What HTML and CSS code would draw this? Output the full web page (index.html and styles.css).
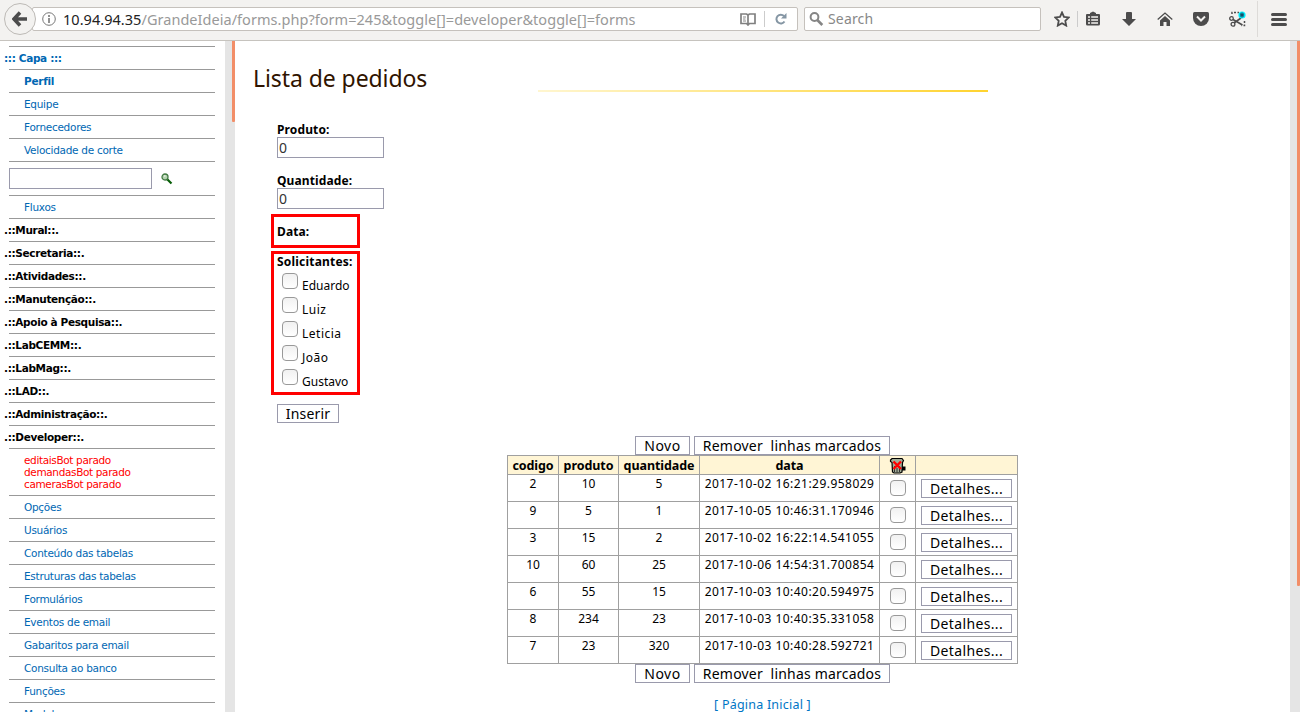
FILE: index.html
```html
<!DOCTYPE html>
<html lang="pt-BR">
<head>
<meta charset="utf-8">
<title>Lista de pedidos</title>
<link rel="stylesheet" href="styles.css">
</head>
<body>
<header class="toolbar">
  <div class="back"><svg width="16" height="16" viewBox="0 0 16 16"><path d="M8 1.500 2 8l6 6.500M2.500 8H15" fill="none" stroke="#4c4c4c" stroke-width="3.500"/></svg></div>
  <div class="address">
    <svg class="info" width="14" height="14" viewBox="0 0 14 14"><circle cx="7" cy="7" r="6.300" fill="none" stroke="#777"/><path d="M7 3v2M7 6v5" stroke="#777" stroke-width="1.600"/></svg>
    <span class="url"><b>10.94.94.35</b>/GrandeIdeia/forms.php?form=245&amp;toggle[]=developer&amp;toggle[]=forms</span>
    <svg class="reader" width="16" height="13" viewBox="0 0 16 13"><path d="M1 1h5.500L8 2l1.500-1H15v9.500H9.500L8 12l-1.500-1.500H1zM8 2v9" fill="none" stroke="#808080" stroke-width="1.700"/><path d="M3 4h3M3 6h2.500M3 8h3" stroke="#888"/></svg>
    <i class="split"></i>
    <svg class="reload" width="12" height="12" viewBox="0 0 12 12"><path d="M9.500 8.500A4.400 4.400 0 1 1 9 3" fill="none" stroke="#8596a4" stroke-width="2"/><path d="M11.500 0v5.500H6z" fill="#8596a4"/></svg>
  </div>
  <div class="search"><svg width="15" height="14" viewBox="0 0 15 14"><circle cx="5.500" cy="5" r="3.900" fill="none" stroke="#858585" stroke-width="2"/><path d="m8.300 8 5 5" stroke="#858585" stroke-width="2.600"/></svg><span>Search</span></div>
  <nav class="tools">
    <svg class="star" width="16" height="16" viewBox="0 0 16 16"><path d="m8 1.500 2 4.300 4.800.6-3.500 3.400.9 4.800L8 12.300l-4.200 2.300.9-4.800L1.200 6.400 6 5.800z" fill="none" stroke="#4c4c4c" stroke-width="1.800"/></svg>
    <i class="split bar"></i>
    <svg class="clip" width="14" height="16" viewBox="0 0 14 16"><path d="M0 4q0-1 1-1h3V2L7 .5 10 2v1h3q1 0 1 1v9q0 1.500-1.500 1.500h-11Q0 14.500 0 13z" fill="#4c4c4c"/><path d="M2 6h2m1.200 0H12M2 9h2m1.200 0H12M2 12h2m1.200 0H12" stroke="#f3f2f0" stroke-width="1.600"/></svg>
    <svg class="down" width="14" height="15" viewBox="0 0 14 15"><path d="M4 1q0-1 1-1h4q1 0 1 1v6h4l-7 7-7-7h4z" fill="#4c4c4c"/></svg>
    <svg class="home" width="16" height="15" viewBox="0 0 16 15"><path d="m.7 7.500 7.300-6.500 7.300 6.500" fill="none" stroke="#4c4c4c" stroke-width="1.300"/><path d="M3 8.500 8 4l5 4.500V14H9.500v-4h-3v4H3z" fill="#4c4c4c"/></svg>
    <svg class="pocket" width="16" height="14" viewBox="0 0 16 14"><path d="M0 1.500Q0 0 1.500 0h13Q16 0 16 1.500V6a8 8 0 0 1-16 0z" fill="#4c4c4c"/><path d="M4 4.500 8 8.500l4-4" fill="none" stroke="#f3f2f0" stroke-width="2"/></svg>
    <svg class="cut" width="17" height="16" viewBox="0 0 17 16"><path d="M3 3V1.500h7M15.500 10v4.500h-3" fill="none" stroke="#4c4c4c" stroke-width="1.500" stroke-dasharray="2 1.500"/><circle cx="2.500" cy="7.500" r="1.800" fill="none" stroke="#4c4c4c" stroke-width="1.300"/><circle cx="4" cy="13.200" r="1.900" fill="none" stroke="#4c4c4c" stroke-width="1.300"/><path d="m4 8.500 9.500 5.500M5 12l7-5" stroke="#4c4c4c" stroke-width="1.600"/><circle cx="13" cy="4" r="3.600" fill="#00f0ff"/><path d="M13 1.600v4.800M11 2.800l4 2.400m0-2.400-4 2.400" stroke="#174c65" stroke-width="1.200"/></svg>
    <i class="split tall"></i>
    <svg class="menu" width="16" height="13" viewBox="0 0 16 13"><path d="M1.500 1.500h13M1.500 6.500h13M1.500 11.500h13" stroke="#4c4c4c" stroke-width="3" stroke-linecap="round"/></svg>
  </nav>
</header>
<div class="page">
  <aside class="sidebar">
    <ul class="side-list">
      <li class="group link">::: Capa :::</li>
      <li><b>Perfil</b></li><li>Equipe</li><li>Fornecedores</li><li>Velocidade de corte</li>
      <li class="find"><input class="find-box" type="text"><svg width="12" height="12" viewBox="0 0 12 12"><path d="m6 6 4.500 4.500" stroke="#075e07" stroke-width="2.200"/><circle cx="4" cy="4" r="3" fill="#b5d3b1" stroke="#427a42" stroke-width="1.300"/><path d="M3 3h1.500" stroke="#fff"/></svg></li>
      <li>Fluxos</li>
      <li class="group">.::Mural::.</li><li class="group">.::Secretaria::.</li><li class="group">.::Atividades::.</li><li class="group">.::Manutenção::.</li><li class="group">.::Apoio à Pesquisa::.</li><li class="group">.::LabCEMM::.</li><li class="group">.::LabMag::.</li><li class="group">.::LAD::.</li><li class="group">.::Administração::.</li><li class="group">.::Developer::.</li>
      <li class="bots">editaisBot parado<br>demandasBot parado<br>camerasBot parado</li>
      <li>Opções</li><li>Usuários</li><li>Conteúdo das tabelas</li><li>Estruturas das tabelas</li><li>Formulários</li><li>Eventos de email</li><li>Gabaritos para email</li><li>Consulta ao banco</li><li>Funções</li><li>Modelos</li>
    </ul>
  </aside>
  <div class="scroll"><i class="thumb"></i></div>
  <main class="content">
    <div class="heading"><h1>Lista de pedidos</h1><i class="rule"></i></div>
    <form class="order">
      <label class="caption">Produto:</label><input class="field" type="text" value="0">
      <label class="caption second">Quantidade:</label><input class="field" type="text" value="0">
      <div class="mark date"><b class="caption">Data:</b></div>
      <div class="mark people"><b class="caption">Solicitantes:</b>
        <label><input type="checkbox"><span>Eduardo</span></label><label><input type="checkbox"><span class="wide">Luiz</span></label><label><input type="checkbox"><span class="wide">Leticia</span></label><label><input type="checkbox"><span class="wide">João</span></label><label><input type="checkbox"><span>Gustavo</span></label>
      </div>
      <button class="btn insert" type="button">Inserir</button>
    </form>
    <div class="actions"><button class="btn new">Novo</button><button class="btn remove">Remover&nbsp; linhas marcados</button></div>
    <table class="orders">
      <colgroup><col class="c1"><col class="c2"><col class="c3"><col class="c4"><col class="c5"><col class="c6"></colgroup>
      <thead><tr><th>codigo</th><th>produto</th><th>quantidade</th><th>data</th><th><svg class="trash" width="17" height="17" viewBox="0 0 17 17"><path d="M3 1.500h10l1.500 2-1 2L13 15l-2 1H5l-1.500-1L3 5.500l-1.500-1V3z" fill="#a3ad98" stroke="#000" stroke-width="1.200"/><path d="M5.500 9v6M8 11v4.500M10.500 9v6" stroke="#333"/><path d="M13 9.500h3.500v4H13z" fill="#000"/><path d="m4.500 4.500 7.500 7.500m0-7.500-7.500 7.500" stroke="#f00" stroke-width="2.400"/></svg></th><th></th></tr></thead>
      <tbody>
        <tr><td>2</td><td>10</td><td>5</td><td class="stamp">2017-10-02 16:21:29.958029</td><td><input type="checkbox"></td><td><button class="btn detail">Detalhes...</button></td></tr>
        <tr><td>9</td><td>5</td><td>1</td><td class="stamp">2017-10-05 10:46:31.170946</td><td><input type="checkbox"></td><td><button class="btn detail">Detalhes...</button></td></tr>
        <tr><td>3</td><td>15</td><td>2</td><td class="stamp">2017-10-02 16:22:14.541055</td><td><input type="checkbox"></td><td><button class="btn detail">Detalhes...</button></td></tr>
        <tr><td>10</td><td>60</td><td>25</td><td class="stamp">2017-10-06 14:54:31.700854</td><td><input type="checkbox"></td><td><button class="btn detail">Detalhes...</button></td></tr>
        <tr><td>6</td><td>55</td><td>15</td><td class="stamp">2017-10-03 10:40:20.594975</td><td><input type="checkbox"></td><td><button class="btn detail">Detalhes...</button></td></tr>
        <tr><td>8</td><td>234</td><td>23</td><td class="stamp">2017-10-03 10:40:35.331058</td><td><input type="checkbox"></td><td><button class="btn detail">Detalhes...</button></td></tr>
        <tr><td>7</td><td>23</td><td>320</td><td class="stamp">2017-10-03 10:40:28.592721</td><td><input type="checkbox"></td><td><button class="btn detail">Detalhes...</button></td></tr>
      </tbody>
    </table>
    <div class="actions"><button class="btn new">Novo</button><button class="btn remove">Remover&nbsp; linhas marcados</button></div>
    <div class="footer">[ Página Inicial ]</div>
  </main>
  <div class="scroll right"><i class="thumb"></i></div>
</div>
</body>
</html>
```
FILE: styles.css
```css
* { box-sizing: border-box; }
html, body { margin: 0; height: 712px; overflow: hidden; }
body { background: #fff; color: #000; font-family: "Noto Sans", sans-serif; font-size: 12px; }
svg { display: block; flex: none; }

.toolbar { display: flex; height: 41px; padding: 7px 0 0 4px; background: #f3f2f0; border-bottom: 1px solid #c6c3be; }
.back { display: flex; align-items: center; justify-content: center; width: 32px; height: 32px; margin-top: -4px; border: 1px solid #bdbab6; border-radius: 50%; background: #f3f2f0; z-index: 1; }
.address, .search { display: flex; align-items: center; height: 24px; background: #fff; border: 1px solid #c5c1bc; border-radius: 2px; }
.address { width: 766px; margin-left: -4px; padding-left: 9px; }
.url { width: 655px; margin-left: 7px; color: #999; font: 14.500px/20px "Noto Sans", sans-serif; letter-spacing: .04px; white-space: nowrap; }
.url b { color: #222; font-weight: 400; }
.reader { margin-left: 22px; }
.split { width: 1px; height: 16px; background: #ccc; }
.address .split { margin-left: 8px; }
.reload { margin-left: 10px; }
.search { width: 237px; margin-left: 6px; padding-left: 4px; color: #888; font: 14px/20px "Noto Sans", sans-serif; }
.search span { margin-left: 4px; letter-spacing: .15px; }
.tools { display: flex; align-items: center; height: 24px; margin-left: 13px; }
.bar { margin-left: 7px; }
.clip { margin-left: 8px; }
.down { margin-left: 22px; }
.home { margin-left: 21px; }
.pocket { margin-left: 20px; }
.cut { margin-left: 20px; }
.tall { height: 36px; margin-left: 11px; background: #dddbd8; }
.menu { margin-left: 13px; }

.page { display: flex; height: 671px; }
.sidebar { width: 225px; height: 671px; padding: 5px 0 0 9px; overflow: hidden; }
.side-list { width: 206px; margin: 0; padding: 0; list-style: none; border-top: 1px solid #999; font: 10.500px/22px "DejaVu Sans", sans-serif; letter-spacing: -.28px; color: #0067b3; white-space: nowrap; }
.side-list li { height: 23px; padding-left: 15px; border-bottom: 1px solid #999; }
.side-list .group { margin-left: 0; padding-left: 0; text-indent: -5px; color: #000; font-weight: 700; letter-spacing: -.35px; }
.side-list .link { color: #0067b3; }
.side-list .find { display: flex; align-items: center; height: 34px; padding-left: 0; }
.find-box { width: 143px; height: 21px; margin: 0 9px 0 0; border: 1px solid #9a9aac; }
.side-list .bots { height: 47px; padding-top: 5px; line-height: 12px; color: #f00; letter-spacing: -.36px; }

.scroll { width: 10px; background: #e5e5e5; }
.thumb { display: block; width: 3px; height: 81px; margin-left: 7px; background: #f28e68; border-radius: 0 0 1px 1px; }
.right .thumb { height: 545px; }

.content { width: 1055px; }
.heading { display: flex; height: 79px; padding: 19px 0 0 18px; }
h1 { width: 285px; margin: 0; color: #301400; font: 400 23px/36px "Noto Sans", sans-serif; letter-spacing: -.08px; white-space: nowrap; }
.rule { width: 450px; height: 2px; margin-top: 30px; background: linear-gradient(90deg, #fff6d0, #ffd32f); }
.order { display: flex; flex-direction: column; align-items: flex-start; height: 316px; padding-left: 42px; }
.caption { height: 17px; font: 700 12px/20px "Noto Sans", sans-serif; letter-spacing: .12px; white-space: nowrap; }
.second { height: 18px; margin-top: 12px; line-height: 22px; }
.field { width: 107px; height: 21px; margin: 0; padding: 0 1px; border: 1px solid #9a9aac; color: #333; font: 14px/19px "Noto Sans", sans-serif; }
.mark { width: 89px; margin-left: -6px; padding-left: 3px; border: 3px solid #f00; }
.date { height: 34px; margin-top: 5px; padding-top: 5px; }
.date .caption, .people .caption { display: block; }
.people { height: 144px; margin-top: 3px; padding-top: 0; }
.people .caption { height: 18px; line-height: 15px; letter-spacing: .2px; }
.people label { display: flex; height: 24px; padding-left: 5px; white-space: nowrap; }
.people span { margin: 5px 0 0 4px; line-height: 18px; }
.people .wide { letter-spacing: .5px; }
input[type="checkbox"] { appearance: none; flex: none; display: block; width: 16px; height: 16px; margin: 1px 0 0; border: 1px solid #999; border-radius: 4px; background: linear-gradient(#f1f1f1, #fff); }
.btn { height: 19px; margin: 0; padding: 0; border: 1px solid #9a9aac; border-radius: 0; background: #fff; color: #000; font: 14px/17px "Noto Sans", sans-serif; letter-spacing: .2px; white-space: nowrap; }
.insert { width: 62px; margin-top: 9px; }
.actions { display: flex; justify-content: center; gap: 4px; height: 19px; }
.new { width: 55px; letter-spacing: .5px; }
.remove { width: 196px; }

.orders { width: 511px; margin: 0 0 0 272px; border-collapse: collapse; table-layout: fixed; }
.c1 { width: 51px; } .c2 { width: 60px; } .c3 { width: 81px; } .c4 { width: 180px; } .c5 { width: 36px; } .c6 { width: 102px; }
.orders th, .orders td { padding: 0; border: 1px solid #a0a0a0; text-align: center; white-space: nowrap; }
.orders th { height: 19px; padding-top: 1px; background: #fff5d5; font-size: 12.500px; line-height: 17px; letter-spacing: -.08px; }
.orders th:nth-child(5) { padding-top: 0; }
.orders td { height: 27px; font-size: 12px; line-height: 18px; vertical-align: top; }
.orders .stamp { letter-spacing: .46px; }
.trash { margin: 0 auto; }
.orders input[type="checkbox"] { margin: 5px auto 0; }
.detail { display: block; width: 91px; margin: 4px auto 0; letter-spacing: .35px; }
.footer { margin-top: 13px; text-align: center; color: #0075c5; font-size: 12.500px; line-height: 18px; letter-spacing: .22px; }
```
